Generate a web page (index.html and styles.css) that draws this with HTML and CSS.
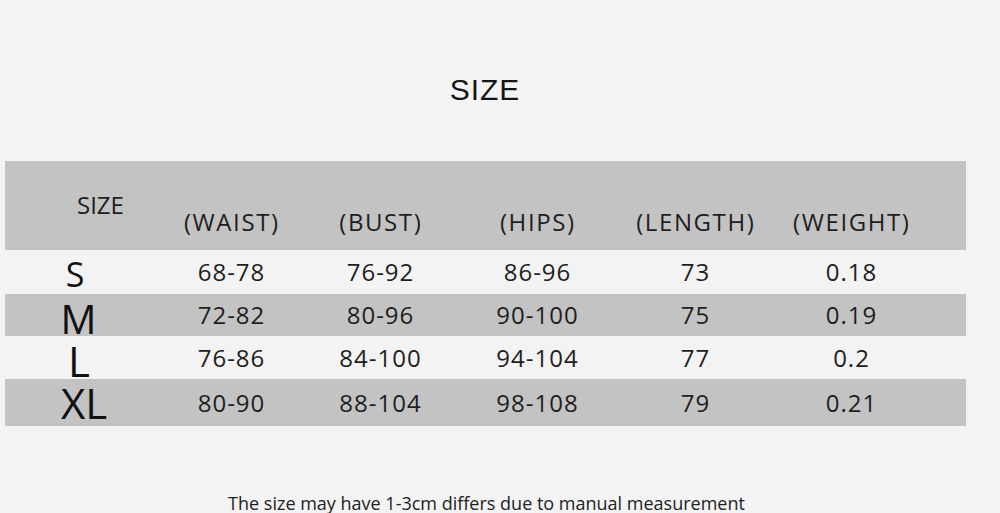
FILE: index.html
```html
<!DOCTYPE html>
<html>
<head>
<meta charset="utf-8">
<link rel="stylesheet" href="styles.css">
</head>
<body>
<div class="page">
  <h1 class="title">SIZE</h1>
  <div class="chart">
    <div class="row head">
      <div class="hsize">SIZE</div>
      <div class="hcol">(WAIST)</div>
      <div class="hcol">(BUST)</div>
      <div class="hcol">(HIPS)</div>
      <div class="hcol">(LENGTH)</div>
      <div class="hcol">(WEIGHT)</div>
    </div>
    <div class="row r-s">
      <div class="sz sz-s">S</div>
      <div class="cell">68-78</div>
      <div class="cell">76-92</div>
      <div class="cell">86-96</div>
      <div class="cell">73</div>
      <div class="cell">0.18</div>
    </div>
    <div class="row r-m shaded">
      <div class="sz sz-m">M</div>
      <div class="cell">72-82</div>
      <div class="cell">80-96</div>
      <div class="cell">90-100</div>
      <div class="cell">75</div>
      <div class="cell">0.19</div>
    </div>
    <div class="row r-l">
      <div class="sz sz-l">L</div>
      <div class="cell">76-86</div>
      <div class="cell">84-100</div>
      <div class="cell">94-104</div>
      <div class="cell">77</div>
      <div class="cell">0.2</div>
    </div>
    <div class="row r-xl shaded">
      <div class="sz sz-xl">XL</div>
      <div class="cell">80-90</div>
      <div class="cell">88-104</div>
      <div class="cell">98-108</div>
      <div class="cell">79</div>
      <div class="cell">0.21</div>
    </div>
  </div>
  <p class="note">The size may have 1-3cm differs due to manual measurement</p>
</div>
</body>
</html>
```

FILE: styles.css
```css
html, body {
  margin: 0;
  padding: 0;
  background: #f3f3f3;
}
body {
  width: 1000px;
  height: 513px;
  overflow: hidden;
  font-family: "Open Sans", "Noto Sans", sans-serif;
  color: #1e1e1e;
}
.page {
  display: flex;
  flex-direction: column;
}
.title {
  margin: 0;
  padding: 75px 30px 0 0;
  font-family: "Liberation Sans", Arial, sans-serif;
  font-weight: normal;
  font-size: 30px;
  line-height: 30px;
  letter-spacing: 1px;
  text-align: center;
  color: #151515;
}
.chart {
  margin: 56px 0 0 5px;
  width: 961px;
  display: flex;
  flex-direction: column;
}
.row {
  display: grid;
  grid-template-columns: 150px 152px 146px 168px 148px 164px 1fr;
  align-items: center;
  font-size: 24px;
  line-height: 24px;
}
.head {
  height: 89px;
  background: #c3c3c3;
}
.shaded {
  background: #c3c3c3;
}
.r-s { height: 44px; }
.r-m { height: 42px; }
.r-l { height: 43px; }
.r-xl { height: 47px; }
.hsize {
  align-self: start;
  justify-self: start;
  padding: 32px 0 0 72px;
  white-space: nowrap;
}
.hcol {
  align-self: end;
  padding: 0 0 16px 1.6px;
  letter-spacing: 1.6px;
  text-align: center;
  white-space: nowrap;
}
.cell {
  padding-left: 1px;
  text-align: center;
  white-space: nowrap;
  letter-spacing: 1px;
}
.sz {
  text-align: center;
  color: #111;
}
.sz-s { font-size: 34px; line-height: 26px; padding: 4px 10px 0 0; }
.sz-m { font-size: 40px; line-height: 30px; padding: 7px 3px 0 0; }
.sz-l { font-size: 42px; line-height: 30px; padding: 6px 2px 0 0; }
.sz-xl { font-size: 42px; line-height: 30px; padding: 0 0 0 8px; }
.note {
  margin: 68px 0 0 0;
  padding-right: 27px;
  font-size: 18px;
  line-height: 18px;
  text-align: center;
  color: #222;
  white-space: nowrap;
}
```
